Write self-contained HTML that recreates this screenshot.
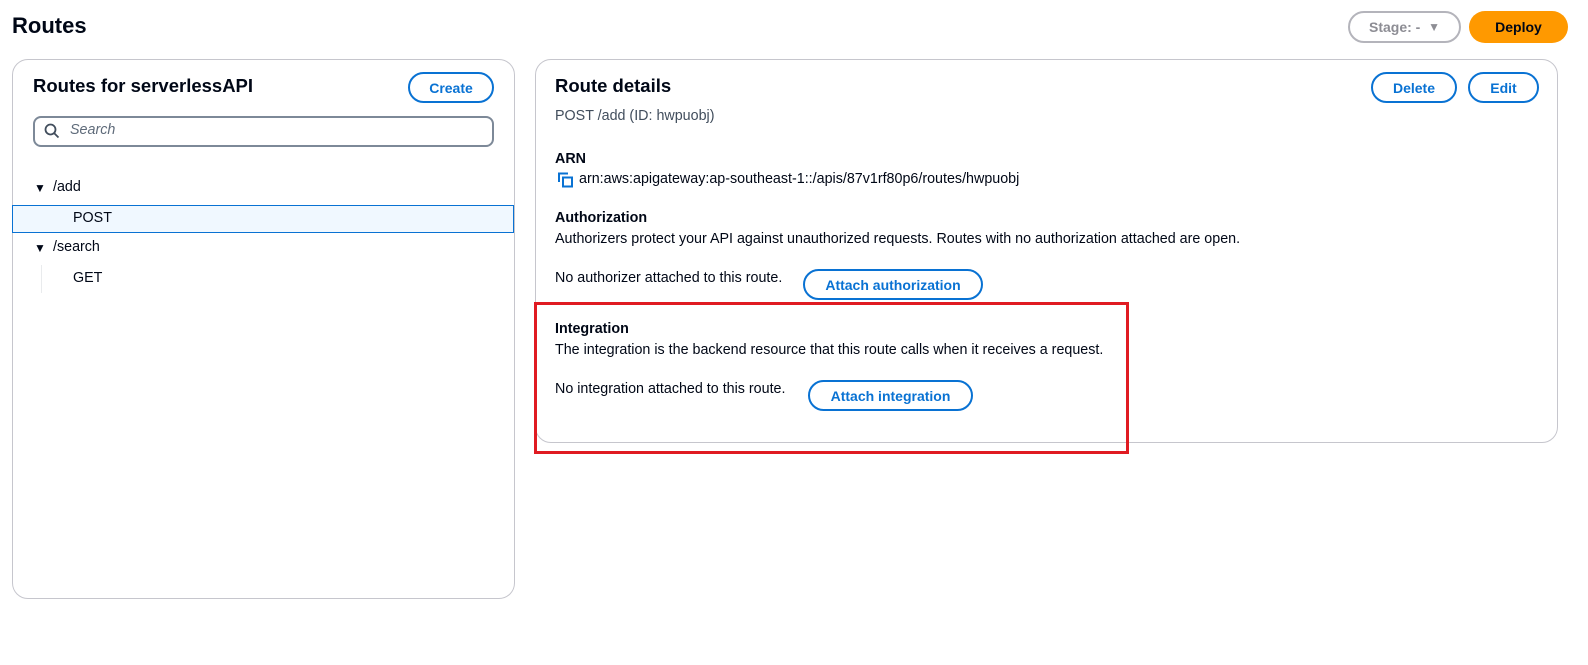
<!DOCTYPE html>
<html><head><meta charset="utf-8"><style>
*{box-sizing:border-box;margin:0;padding:0}
body{width:1588px;height:665px;background:#fff;font-family:"Liberation Sans",sans-serif;color:#000716;position:relative;overflow:hidden;font-size:14.3px}
.a{position:absolute;white-space:nowrap}
.panel{position:absolute;border:1px solid #c6c6cd;border-radius:16px;background:#fff}
.btn{position:absolute;border:2px solid #0972d3;border-radius:20px;color:#0972d3;font-weight:bold;font-size:14px;display:flex;align-items:center;justify-content:center;background:#fff}
</style></head><body>
<div class="a" style="left:12px;top:13px;font-size:22px;font-weight:bold">Routes</div>
<div class="btn" style="left:1348px;top:11px;width:113px;height:32px;border-color:#b4b4bb;color:#8d8d94">Stage: - &nbsp;<span style="font-size:12px">▼</span></div>
<div class="btn" style="left:1469px;top:11px;width:99px;height:32px;border:none;background:#ff9900;color:#000716">Deploy</div>

<div class="panel" style="left:12px;top:59px;width:503px;height:540px"></div>
<div class="a" style="left:33px;top:75px;font-size:18.5px;font-weight:bold">Routes for serverlessAPI</div>
<div class="btn" style="left:408px;top:72px;width:86px;height:31px">Create</div>
<div class="a" style="left:33px;top:116px;width:461px;height:31px;border:2px solid #7d8998;border-radius:8px"></div>
<svg class="a" style="left:44px;top:123px" width="16" height="16" viewBox="0 0 16 16"><circle cx="6.5" cy="6.5" r="5" fill="none" stroke="#414d5c" stroke-width="1.8"/><path d="M10 10l4.5 4.5" stroke="#414d5c" stroke-width="1.8"/></svg>
<div class="a" style="left:70px;top:122px;font-style:italic;color:#5f6b7a">Search</div>
<div class="a" style="left:34px;top:181px;font-size:12px">▼</div>
<div class="a" style="left:53px;top:179px">/add</div>
<div class="a" style="left:12px;top:205px;width:502px;height:28px;background:#f0f8ff;border:1px solid #0972d3"></div>
<div class="a" style="left:73px;top:210px">POST</div>
<div class="a" style="left:34px;top:241px;font-size:12px">▼</div>
<div class="a" style="left:53px;top:239px">/search</div>
<div class="a" style="left:41px;top:265px;width:1px;height:28px;background:#e9ebed"></div>
<div class="a" style="left:73px;top:270px">GET</div>

<div class="panel" style="left:535px;top:59px;width:1023px;height:384px"></div>
<div class="a" style="left:555px;top:75px;font-size:18.5px;font-weight:bold">Route details</div>
<div class="btn" style="left:1371px;top:72px;width:86px;height:31px">Delete</div>
<div class="btn" style="left:1468px;top:72px;width:71px;height:31px">Edit</div>
<div class="a" style="left:555px;top:108px;color:#414d5c">POST /add (ID: hwpuobj)</div>
<div class="a" style="left:555px;top:151px;font-weight:bold">ARN</div>
<svg class="a" style="left:558px;top:172px" width="17" height="17" viewBox="0 0 17 17"><path d="M1 10V1.5h9" fill="none" stroke="#0972d3" stroke-width="2"/><rect x="5" y="5.5" width="9" height="9" fill="none" stroke="#0972d3" stroke-width="2"/></svg>
<div class="a" style="left:579px;top:171px">arn:aws:apigateway:ap-southeast-1::/apis/87v1rf80p6/routes/hwpuobj</div>
<div class="a" style="left:555px;top:210px;font-weight:bold">Authorization</div>
<div class="a" style="left:555px;top:231px">Authorizers protect your API against unauthorized requests. Routes with no authorization attached are open.</div>
<div class="a" style="left:555px;top:270px">No authorizer attached to this route.</div>
<div class="btn" style="left:803px;top:269px;width:180px;height:31px">Attach authorization</div>
<div class="a" style="left:555px;top:321px;font-weight:bold">Integration</div>
<div class="a" style="left:555px;top:342px">The integration is the backend resource that this route calls when it receives a request.</div>
<div class="a" style="left:555px;top:381px">No integration attached to this route.</div>
<div class="btn" style="left:808px;top:380px;width:165px;height:31px">Attach integration</div>
<div class="a" style="left:534px;top:302px;width:595px;height:152px;border:3px solid #e01b22"></div>
</body></html>
